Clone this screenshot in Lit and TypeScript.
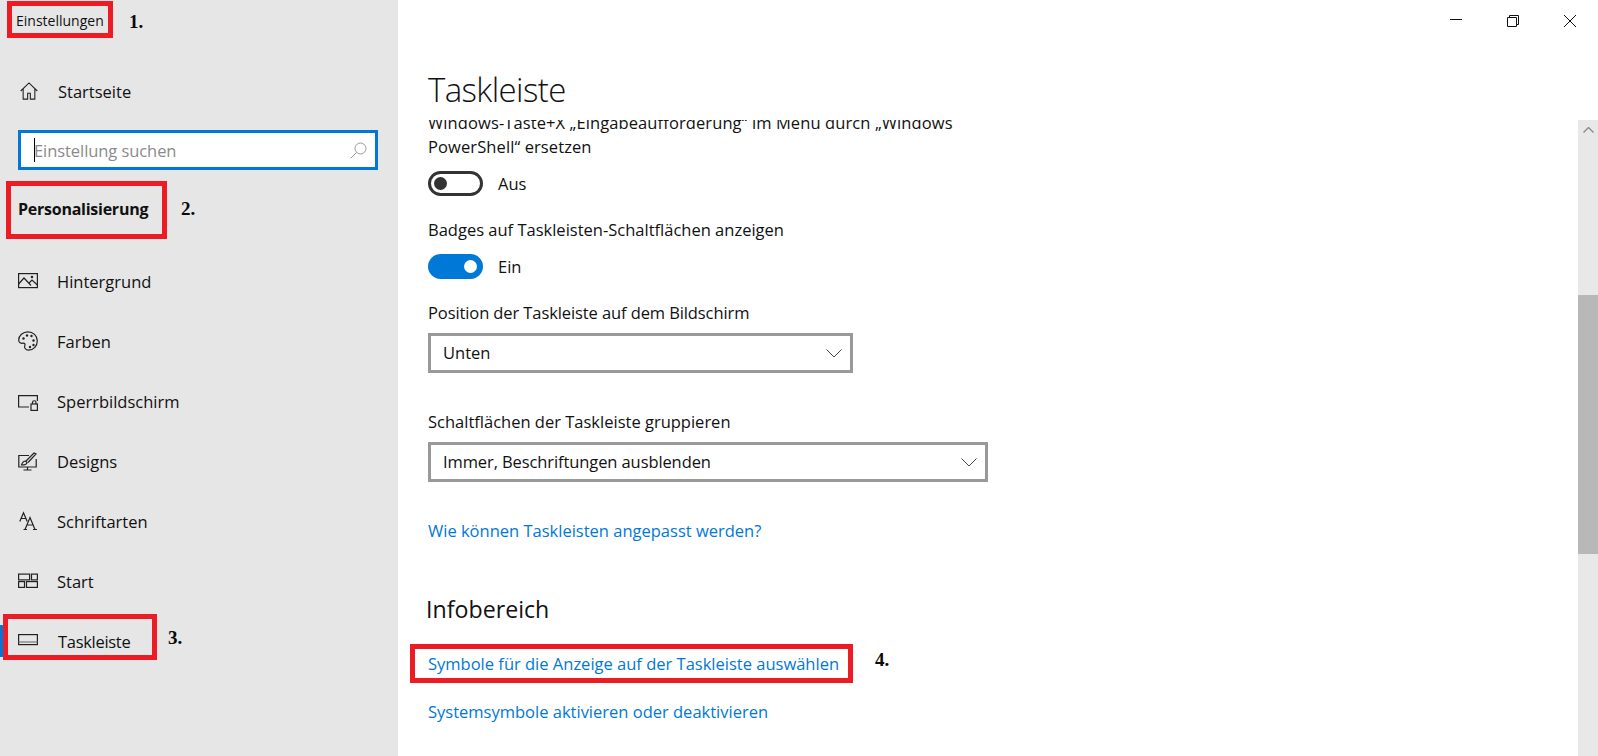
import { LitElement, html, css, svg } from "lit";
import { customElement } from "lit/decorators.js";

const icon = (body: unknown) => html`<svg class="ico" viewBox="0 0 20 20" fill="none" stroke="currentColor" stroke-width="1.2">${body}</svg>`;

const ICONS: Record<string, unknown> = {
  home: svg`<path d="M.8 10 10 1l9.200 9M3.500 7.500V19h5v-6.500h3V19h5V7.500"/>`,
  bg: svg`<rect x=".6" y="2.600" width="18.800" height="14"/><path d="M.6 13 6 7l7 7.500M11 12l3-3 5.400 5"/><circle cx="14" cy="6" r=".7"/>`,
  colors: svg`<path d="M10 .8C4.800.8.700 4.500.700 9c0 3 2.300 3.500 4.300 3.200 1.800-.2 2.500 1 1.800 2.300-.9 1.800.5 4.700 3.700 4.700 5.200 0 8.800-4.300 8.800-9.400S15 .8 10 .8Z"/><g fill="currentColor" stroke="none"><circle cx="5.500" cy="7.500" r="1.200"/><circle cx="9" cy="4.500" r="1.200"/><circle cx="13.500" cy="5" r="1.200"/><circle cx="15.500" cy="9.500" r="1.200"/><circle cx="15.500" cy="14" r="1.200"/><circle cx="12" cy="16" r="1.200"/></g>`,
  lock: svg`<path d="M11 16H.6V4.600h18.800V10"/><rect x="13" y="13" width="6.400" height="6.400"/><path d="M14.500 13v-1.500a1.700 1.700 0 0 1 3.500 0V13"/>`,
  designs: svg`<path d="M11 4.500H.8v11.500h17.400V8M9.500 16v3M5.500 19h8"/><path d="M3.500 14c1-3 2.500-4 4-4l1.500 1.500c0 1.500-2 2.500-5.500 2.500ZM8 10l8-8 2 1-8 8.500" fill="#e6e6e6"/>`,
  fonts: svg`<path d="M1.800 10.500 5.500 1.800l3.700 8.700M3.200 7.500h4.600"/><path d="M7 18.500 12 6.500l5 12M8.700 14h6.600M5.500 18.500h3.500M15 18.500h4"/>`,
  start: svg`<rect x=".6" y="3.100" width="11" height="5.800"/><rect x="13.500" y="3.100" width="5.900" height="5.800"/><rect x=".6" y="10.600" width="5.900" height="5.800"/><rect x="8.500" y="10.600" width="10.900" height="5.800"/>`,
  taskbar: svg`<rect x=".6" y="3.600" width="18.800" height="10"/><path d="M.6 11h18.800" stroke="#777"/>`,
};

const NAV = [
  ["bg", "Hintergrund"],
  ["colors", "Farben"],
  ["lock", "Sperrbildschirm"],
  ["designs", "Designs"],
  ["fonts", "Schriftarten"],
  ["start", "Start"],
  ["taskbar", "Taskleiste"],
];

const chevron = html`<svg class="chev" viewBox="0 0 16 9" fill="none" stroke="#444" stroke-width="1"><path d="M.5.5 8 8 15.500.5"/></svg>`;

@customElement("app-root")
export class AppRoot extends LitElement {
  static styles = css`
    :host { display: block; width: 1598px; height: 756px; overflow: hidden; position: relative; background: #fff; color: #111; font-family: "Open Sans", "Noto Sans", sans-serif; font-size: 16.5px; }
    .window { display: flex; height: 756px; }
    .side { width: 398px; flex: none; background: #e6e6e6; display: flex; flex-direction: column; }
    .apptitle { height: 41px; padding-left: 16px; display: flex; align-items: center; font-size: 14px; }
    .row { height: 60px; display: flex; align-items: center; padding-left: 18px; position: relative; flex: none; }
    .row.home { margin-top: 20px; padding-left: 20px; }
    .ico { width: 20px; height: 20px; flex: none; margin-right: 19px; color: #222; }
    .home .ico { width: 18px; height: 18px; margin-right: 20px; }
    .row.cur span { margin-left: 1px; letter-spacing: -0.3px; }
    .search { margin: 9px 0 0 18px; width: 360px; height: 40px; box-sizing: border-box; border: 3px solid #0078d7; background: #fff; display: flex; align-items: center; padding: 0 8px 0 13px; color: #8a8a8a; flex: none; letter-spacing: -0.07px; }
    .caret { width: 1px; height: 24px; background: #000; margin-right: -1px; flex: none; }
    .search span { flex: 1; }
    .lens { width: 17px; height: 17px; }
    .cat { height: 78px; display: flex; align-items: center; padding-left: 18px; font-weight: 700; margin-bottom: 3px; flex: none; font-size: 16px; letter-spacing: -0.25px; }
    .active { position: absolute; left: 0; top: 14px; width: 3px; height: 32px; background: #0078d7; }
    .main { flex: 1; display: flex; flex-direction: column; min-width: 0; }
    .caption { height: 41px; display: flex; justify-content: flex-end; flex: none; }
    .cbtn { width: 57px; height: 41px; display: flex; align-items: center; justify-content: center; }
    .cbtn svg { width: 12px; height: 12px; }
    .title { height: 79px; flex: none; padding-left: 30px; font-size: 33px; line-height: 98px; font-weight: 300; letter-spacing: -0.6px; box-sizing: border-box; }
    .body { flex: 1; display: flex; min-height: 0; }
    .scroll { flex: 1; overflow: hidden; padding-left: 30px; }
    .content { margin-top: -9px; display: flex; flex-direction: column; align-items: flex-start; line-height: 24px; }
    .wrap { width: 545px; letter-spacing: 0.1px; }
    .toggle-row { display: flex; align-items: center; gap: 15px; margin-top: 12px; height: 25px; }
    .toggle { width: 55px; height: 25px; box-sizing: border-box; border: 3px solid #333; border-radius: 13px; display: flex; align-items: center; padding: 0 3px; background: #fff; }
    .toggle i { width: 13px; height: 13px; border-radius: 50%; background: #333; display: block; }
    .toggle.on { background: #0078d7; border-color: #0078d7; justify-content: flex-end; }
    .toggle.on i { background: #fff; }
    .label { margin-top: 22px; }
    .label.tight { letter-spacing: -0.1px; }
    .label.far { margin-top: 37px; }
    .label.first { margin-top: 27px; }
    .label.last { margin-top: 24px; }
    .select { box-sizing: border-box; height: 40px; border: 3px solid #999; display: flex; align-items: center; justify-content: space-between; padding: 0 8px 0 12px; margin-top: 8px; background: #fff; }
    .select.a { width: 425px; }
    .select.b { width: 560px; }
    .select.b span { letter-spacing: -0.1px; }
    .chev { width: 16px; height: 9px; }
    a { color: #0078d7; text-decoration: none; display: block; }
    .h2 { font-size: 23.200px; line-height: 32px; margin: 50px 0 0 -2px; color: #111; }
    .bar { width: 20px; flex: none; background: #e8e8e8; display: flex; flex-direction: column; }
    .up { height: 20px; display: flex; align-items: center; justify-content: center; flex: none; }
    .up svg { width: 11px; height: 6px; }
    .thumb { margin-top: 155px; height: 259px; background: #b8b8b8; flex: none; }
    .box { position: absolute; box-sizing: border-box; border: 5px solid #ed1c24; pointer-events: none; }
    .n { position: absolute; font-family: "Liberation Serif", serif; font-weight: 700; font-size: 19px; line-height: 20px; color: #0a0a0a; }
  `;

  render() {
    return html`
      <div class="window">
        <aside class="side">
          <div class="apptitle">Einstellungen</div>
          <div class="row home">${icon(ICONS.home)}<span>Startseite</span></div>
          <div class="search">
            <i class="caret"></i><span>Einstellung suchen</span>
            <svg class="lens" viewBox="0 0 17 17" fill="none" stroke="#999" stroke-width="1"><circle cx="10.500" cy="6.500" r="5.500"/><path d="M6.500 10.500.8 16.200"/></svg>
          </div>
          <div class="cat">Personalisierung</div>
          ${NAV.map(([k, t]) => html`<div class="row ${k === "taskbar" ? "cur" : ""}">${k === "taskbar" ? html`<i class="active"></i>` : ""}${icon(ICONS[k])}<span>${t}</span></div>`)}
        </aside>
        <main class="main">
          <div class="caption">
            <div class="cbtn"><svg viewBox="0 0 12 12" stroke="#111"><path d="M0 4.500h12"/></svg></div>
            <div class="cbtn"><svg viewBox="0 0 12 12" fill="none" stroke="#111"><path d="M.5 2.500h9v9h-9zM2.500 2.500v-2h9v9h-2"/></svg></div>
            <div class="cbtn"><svg viewBox="0 0 12 12" fill="none" stroke="#111"><path d="m0 0 12 12M12 0 0 12"/></svg></div>
          </div>
          <div class="title">Taskleiste</div>
          <div class="body">
            <div class="scroll">
              <div class="content">
                <div class="wrap">Windows-Taste+X „Eingabeaufforderung“ im Menü durch „Windows PowerShell“ ersetzen</div>
                <div class="toggle-row"><div class="toggle"><i></i></div><span>Aus</span></div>
                <div class="label">Badges auf Taskleisten-Schaltflächen anzeigen</div>
                <div class="toggle-row"><div class="toggle on"><i></i></div><span>Ein</span></div>
                <div class="label tight">Position der Taskleiste auf dem Bildschirm</div>
                <div class="select a"><span>Unten</span>${chevron}</div>
                <div class="label far">Schaltflächen der Taskleiste gruppieren</div>
                <div class="select b"><span>Immer, Beschriftungen ausblenden</span>${chevron}</div>
                <a class="label far" href="#">Wie können Taskleisten angepasst werden?</a>
                <div class="h2">Infobereich</div>
                <a class="label first" href="#">Symbole für die Anzeige auf der Taskleiste auswählen</a>
                <a class="label last" href="#">Systemsymbole aktivieren oder deaktivieren</a>
              </div>
            </div>
            <div class="bar">
              <div class="up"><svg viewBox="0 0 11 6" fill="none" stroke="#888" stroke-width="1.300"><path d="m.5 5.500 5-5 5 5"/></svg></div>
              <div class="thumb"></div>
            </div>
          </div>
        </main>
      </div>
      <div class="box" style="left:7px;top:1px;width:106px;height:37px"></div>
      <div class="box" style="left:6px;top:181px;width:161px;height:58px"></div>
      <div class="box" style="left:3px;top:614px;width:154px;height:46px"></div>
      <div class="box" style="left:410px;top:644px;width:443px;height:39px"></div>
      <span class="n" style="left:129px;top:12px">1.</span>
      <span class="n" style="left:181px;top:199px">2.</span>
      <span class="n" style="left:168px;top:628px">3.</span>
      <span class="n" style="left:875px;top:650px">4.</span>
    `;
  }
}
